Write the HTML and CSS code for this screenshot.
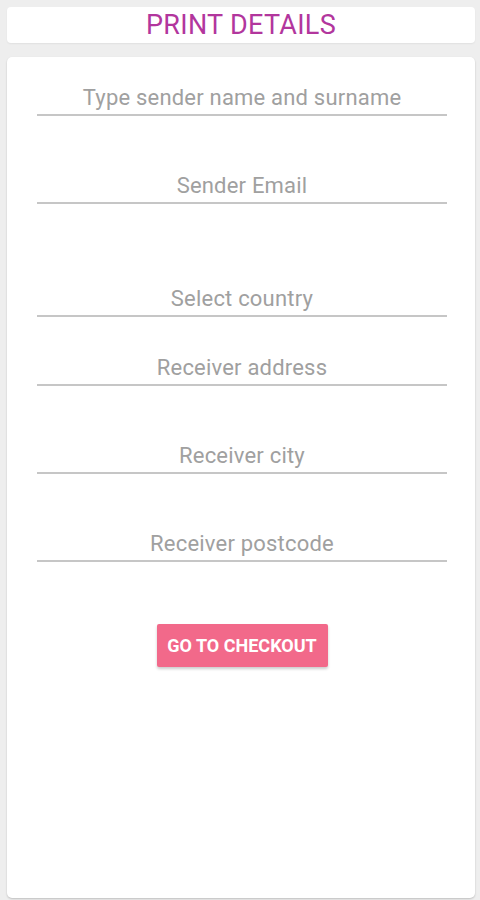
FILE: index.html
```html
<!DOCTYPE html>
<html lang="en">
<head>
    <meta charset="UTF-8">
    <title>Print Details</title>
    <link rel="stylesheet" href="styles.css">
</head>
<body>
    <div class="header">
        <h1>PRINT DETAILS</h1>
    </div>
    <div class="card">
        <input class="field" placeholder="Type sender name and surname">
        <input class="field gap-md" placeholder="Sender Email">
        <input class="field gap-lg" placeholder="Select country">
        <input class="field gap-sm" placeholder="Receiver address">
        <input class="field gap-md" placeholder="Receiver city">
        <input class="field gap-md" placeholder="Receiver postcode">
        <button class="checkout">GO TO CHECKOUT</button>
    </div>
</body>
</html>
```

FILE: styles.css
```css
html, body { height: 100%; }
body { margin: 0; padding: 7px 5px 2px 7px; box-sizing: border-box; background: #eeeeee; font-family: Roboto, "Liberation Sans", sans-serif; display: flex; flex-direction: column; gap: 14px; }
.header { background: #fff; border-radius: 4px; height: 36px; display: flex; align-items: center; justify-content: center; box-shadow: 0 1px 2px rgba(0,0,0,0.06); }
h1 { margin: 0; font-size: 27px; font-weight: 400; color: #b2369d; letter-spacing: 0.3px; }
.card { flex: 1; background: #fff; border-radius: 5px; padding: 27px 28px 0 30px; display: flex; flex-direction: column; align-items: center; box-shadow: 0 1px 2px rgba(0,0,0,0.2); }
.field { width: 100%; height: 32px; box-sizing: border-box; border: none; border-bottom: 2px solid #c6c6c6; padding: 0 0 4px; font-family: inherit; font-size: 22px; letter-spacing: 0.2px; color: #555; text-align: center; outline: none; background: transparent; }
.field::placeholder { color: #a0a0a0; }
.gap-sm { margin-top: 37px; }
.gap-md { margin-top: 56px; }
.gap-lg { margin-top: 81px; }
.checkout { margin-top: 62px; width: 171px; height: 43px; background: #f2698a; color: #fff; border: none; border-radius: 2px; font-family: inherit; font-size: 18px; font-weight: 700; box-shadow: 0 2px 3px rgba(0,0,0,0.2); cursor: pointer; }
```
